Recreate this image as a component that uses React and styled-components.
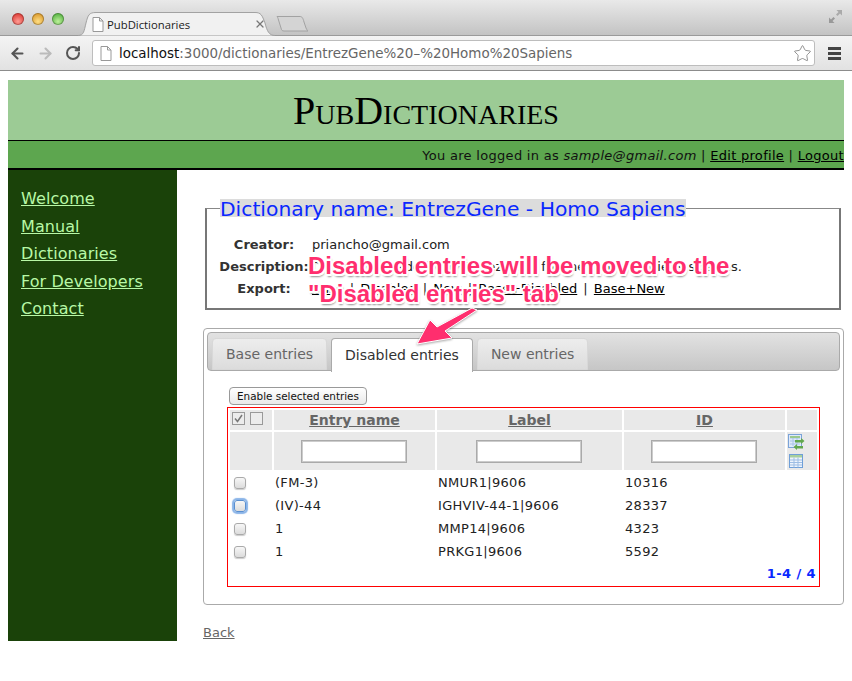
import React from "react";
import styled, { createGlobalStyle } from "styled-components";
import { ArrowLeft, ArrowRight, RotateCw, Star, X } from "lucide-react";

const Global = createGlobalStyle`
  html, body { margin: 0; padding: 0; background: #fff; }
  body { font-family: "DejaVu Sans", Verdana, sans-serif; height: 681px; overflow: hidden; }
`;

const Shell = styled.div`
  position: relative;
  width: 852px;
  height: 681px;
  overflow: hidden;
`;

/* browser chrome */
const TabStrip = styled.div`
  height: 36px;
  display: flex;
  align-items: flex-end;
  padding-left: 12px;
  background: linear-gradient(#e9e9e9, #c3c3c3);
  border-bottom: 1px solid #9a9a9a;
  box-sizing: border-box;
`;
const Lights = styled.div`
  display: flex;
  gap: 8px;
  align-self: flex-start;
  margin: 13px 14px 0 0;
`;
const Light = styled.span`
  width: 12px;
  height: 12px;
  border-radius: 50%;
  background: radial-gradient(circle at 50% 70%, ${(p) => p.$hi}, ${(p) => p.$c} 70%);
  box-shadow: inset 0 0 0 1px rgba(0, 0, 0, 0.25);
`;
const BrowserTab = styled.div`
  position: relative;
  width: 197px;
  height: 24px;
  margin-bottom: -1px;
  display: flex;
  align-items: center;
  padding: 0 0 0 14px;
  box-sizing: border-box;
  font: 11.3px "Open Sans", sans-serif;
  color: #222;
  svg.shape { position: absolute; left: 0; top: 0; z-index: 0; }
`;
const TabLabel = styled.span`
  position: relative;
  flex: 1;
`;
const TabGlyph = styled.span`
  position: relative;
  display: flex;
  margin-right: 3px;
`;
const TabClose = styled(X)`
  position: relative;
  margin-right: 9px;
  color: #777;
`;
const NewTab = styled.svg`
  margin: 0 0 3px 1px;
`;
const Expand = styled.svg`
  position: absolute;
  top: 9px;
  right: 9px;
`;
const Toolbar = styled.div`
  height: 35px;
  display: flex;
  align-items: center;
  padding-left: 9px;
  box-sizing: border-box;
  background: linear-gradient(#f4f4f4, #e2e2e2);
  border-bottom: 1px solid #8c8c8c;
`;
const NavIcon = styled.span`
  display: flex;
  width: ${(p) => p.$w || 28}px;
  color: ${(p) => p.$c};
`;
const UrlBar = styled.div`
  width: 723px;
  height: 26px;
  box-sizing: border-box;
  display: flex;
  align-items: center;
  padding: 0 2px 0 7px;
  background: #fff;
  border: 1px solid #bdbdbd;
  border-radius: 3px;
  font: 13.45px "DejaVu Sans", sans-serif;
  color: #666;
  b { font-weight: 400; color: #111; }
`;
const UrlText = styled.span`
  flex: 1;
  margin-left: 7px;
  white-space: nowrap;
`;
const MenuBars = styled.div`
  margin-left: 13px;
  width: 13px;
  display: flex;
  flex-direction: column;
  gap: 2px;
  i { display: block; height: 3px; background: #444; }
`;

/* page */
const Page = styled.div`
  padding: 9px 8px 0;
`;
const Title = styled.h1`
  margin: 0;
  height: 60px;
  background: #9ccb95;
  text-align: center;
  font: 400 40px/61px "Liberation Serif", serif;
  font-variant: small-caps;
  color: #000;
`;
const UserBar = styled.div`
  height: 30px;
  box-sizing: border-box;
  padding-top: 1px;
  background: #5da64f;
  border-top: 1px solid #000;
  border-bottom: 2px solid #000;
  display: flex;
  justify-content: flex-end;
  align-items: center;
  font-size: 13px;
  letter-spacing: 0.3px;
  white-space: nowrap;
  color: #111;
  a { color: #000; text-decoration: underline; }
`;
const Body = styled.div`
  display: flex;
  align-items: flex-start;
`;
const Side = styled.nav`
  width: 169px;
  height: 471px;
  flex: none;
  box-sizing: border-box;
  background: #1a4209;
  padding: 15px 0 0 13px;
  display: flex;
  flex-direction: column;
  align-items: flex-start;
`;
const SideLink = styled.a`
  font-size: 16px;
  letter-spacing: 0.08px;
  line-height: 27.5px;
  color: #b8f8a6;
  text-decoration: underline;
`;
const Main = styled.main`
  flex: 1;
  padding: 29px 0 0 26px;
  min-width: 0;
`;
const Info = styled.fieldset`
  margin: 0 3px 0 2px;
  padding: 16px 0 9px 11px;
  border: 1px solid #666;
  border-width: 1px 2px 2px 2px;
  border-color: #888 #777 #777 #777;
  font-size: 13px;
`;
const Legend = styled.legend`
  padding: 0;
  margin-left: 2px;
  height: 18px;
  background: #dcdcdc;
  color: #0a28ff;
  font-size: 20.3px;
  line-height: 20px;
`;
const InfoRow = styled.div`
  display: flex;
  height: 22px;
  align-items: center;
  color: #222;
`;
const InfoLabel = styled.strong`
  width: 92px;
  margin-right: 2px;
  text-align: center;
  color: #333;
`;
const Blurb = styled.span`
  letter-spacing: 0.1px;
`;
const ExportLink = styled.a`
  color: #000;
  text-decoration: underline;
`;
const Sep = styled.span`
  margin: 0 6.1px;
`;

const TabsBox = styled.section`
  margin-top: 18px;
  height: 277px;
  box-sizing: border-box;
  padding: 3px;
  border: 1px solid #aaa;
  border-radius: 4px;
`;
const TabBar = styled.div`
  height: 39px;
  box-sizing: border-box;
  display: flex;
  align-items: flex-end;
  gap: 4px;
  padding-left: 4px;
  background: linear-gradient(#e2e2e2, #c6c6c6);
  border: 1px solid #aaa;
  border-radius: 4px;
`;
const TabBtn = styled.div`
  height: ${(p) => (p.$on ? "34px" : "32px")};
  margin-bottom: ${(p) => (p.$on ? "-2px" : "0")};
  padding: ${(p) => (p.$on ? "0 13px 2px" : "0 13px")};
  box-sizing: border-box;
  display: flex;
  align-items: center;
  font-size: 14px;
  color: ${(p) => (p.$on ? "#333" : "#666")};
  background: ${(p) => (p.$on ? "#fff" : "linear-gradient(#ededed, #dcdcdc)")};
  border: 1px solid ${(p) => (p.$on ? "#aaa" : "#d8d8d8")};
  border-bottom: ${(p) => (p.$on ? "none" : undefined)};
  border-radius: 4px 4px 0 0;
  position: relative;
`;
const Panel = styled.div`
  padding: 16px 20px 0 20px;
`;
const EnableBtn = styled.button`
  display: block;
  width: 138px;
  height: 18px;
  margin-left: 2px;
  padding: 0;
  font: 10.4px "DejaVu Sans", sans-serif;
  color: #111;
  background: linear-gradient(#fff, #e9e9e9);
  border: 1px solid #999;
  border-radius: 4px;
`;
const Frame = styled.div`
  margin-top: 2px;
  height: 180px;
  box-sizing: border-box;
  border: 1px solid #f00;
  position: relative;
`;
const Grid = styled.table`
  border-collapse: separate;
  border-spacing: 2px;
  width: 100%;
  table-layout: fixed;
  font-size: 13px;
  color: #222;
`;
const Head = styled.th`
  height: 20px;
  padding: 0;
  background: #e9e9e9;
  font-size: 14px;
  color: #666;
  text-decoration: underline;
  vertical-align: middle;
`;
const FilterCell = styled.td`
  height: 38px;
  padding: 0 2px 0 0;
  background: #e9e9e9;
  text-align: center;
  vertical-align: middle;
`;
const Filter = styled.input`
  display: block;
  margin: 0 auto;
  width: 106px;
  height: 23px;
  box-sizing: border-box;
  border: 1px solid #aaa;
  box-shadow: inset 0 0 0 1px #ccc;
  background: #fff;
`;
const Cell = styled.td`
  height: 21px;
  padding: 0 0 0 1px;
  letter-spacing: 0.3px;
  vertical-align: middle;
`;
const Square = styled.span`
  display: block;
  width: 13px;
  height: 13px;
  box-sizing: border-box;
  border: 1px solid #999;
  background: #ececec;
  svg { display: block; }
`;
const HeadChecks = styled.div`
  display: flex;
  gap: 5px;
  padding: 0 0 3px 2px;
`;
const RowCheck = styled.span`
  display: block;
  width: 12px;
  height: 12px;
  margin-left: 3px;
  box-sizing: border-box;
  border: 1px solid ${(p) => (p.$focus ? "#5a8fd0" : "#aaa")};
  border-radius: 3px;
  background: linear-gradient(#f7f7f7, #dcdcdc);
  box-shadow: ${(p) => (p.$focus ? "0 0 1px 2px #8ab4e8" : "0 1px 1px #ccc")};
`;
const IconStack = styled.div`
  display: flex;
  flex-direction: column;
  align-items: flex-start;
  gap: 3px;
  padding-left: 1px;
  margin-top: -1px;
  svg { display: block; }
  svg:last-child { margin-left: 1px; }
`;
const Pager = styled.div`
  position: absolute;
  right: 3px;
  bottom: 5px;
  font-size: 13px;
  font-weight: 700;
  letter-spacing: 0.4px;
  color: #0a28ff;
`;
const BackLink = styled.a`
  display: inline-block;
  margin-top: 20px;
  font-size: 13px;
  color: #666;
  text-decoration: underline;
`;

/* annotation laid over the page */
const Callout = styled.div`
  position: absolute;
  left: 308px;
  top: 252px;
  font: 700 24px/28px "Liberation Sans", sans-serif;
  color: #ff2e6e;
  white-space: pre;
  text-shadow:
    -2px 0 0 #fff, 2px 0 0 #fff, 0 -2px 0 #fff, 0 2px 0 #fff,
    -1.5px -1.5px 0 #fff, 1.5px -1.5px 0 #fff, -1.5px 1.5px 0 #fff, 1.5px 1.5px 0 #fff,
    1px 3px 2px rgba(0, 0, 0, 0.45);
`;
const CalloutArrow = styled.svg`
  position: absolute;
  left: 408px;
  top: 302px;
  filter: drop-shadow(0 1px 1px rgba(0, 0, 0, 0.35));
`;

const PageGlyph = () => (
  <svg width="12" height="15" viewBox="0 0 12 15">
    <path d="M1 .5h6.5L11 4v10.5H1z M7.5 .5V4H11" fill="#fff" stroke="#999" />
  </svg>
);

const SwapIcon = () => (
  <svg width="17" height="17" viewBox="0 0 17 17">
    <rect x=".5" y=".5" width="13" height="13" fill="#dfeafa" stroke="#7ba3d8" />
    <path d="M2 4h10M2 7h10M2 10h10M5 2v10M9 2v10" stroke="#a9c5e8" />
    <path d="M2 2h10v2H2z" fill="#9bc98e" />
    <path d="M7 6h6V4l3.5 3-3.5 3V8.500H7z" fill="#62a84e" />
    <path d="M15 12H9v-2l-3.500 3 3.500 3v-1.500h6z" fill="#62a84e" />
  </svg>
);

const TableIcon = () => (
  <svg width="14" height="14" viewBox="0 0 14 14">
    <rect x=".5" y=".5" width="13" height="13" fill="#eef4fc" stroke="#6f9fd8" />
    <path d="M1 1h12v2.500H1z" fill="#a8cf9c" />
    <path d="M1 6h12M1 8.500h12M1 11h12M5 3.500v10M9 3.500v10" stroke="#9dbde4" />
  </svg>
);

const rows = [
  ["(FM-3)", "NMUR1|9606", "10316"],
  ["(IV)-44", "IGHVIV-44-1|9606", "28337"],
  ["1", "MMP14|9606", "4323"],
  ["1", "PRKG1|9606", "5592"],
];

export default function App() {
  return (
    <Shell>
      <Global />
      <TabStrip>
        <Lights>
          <Light $c="#e0443e" $hi="#ff9c94" />
          <Light $c="#dea034" $hi="#ffdf85" />
          <Light $c="#5fb84a" $hi="#bdf09a" />
        </Lights>
        <BrowserTab>
          <svg className="shape" width="197" height="24" viewBox="0 0 197 24">
            <path
              d="M0 23.500C6 23.500 6 19 8 11 10 3 11 .5 18 .5H177C183 .5 184 3 187 11 189 19 191 23.500 197 23.500"
              fill="#f1f1f1"
              stroke="#a2a2a2"
            />
          </svg>
          <TabGlyph>
            <PageGlyph />
          </TabGlyph>
          <TabLabel>PubDictionaries</TabLabel>
          <TabClose size={12} strokeWidth={2.5} />
        </BrowserTab>
        <NewTab width="33" height="17" viewBox="0 0 33 17">
          <path
            d="M1 1.500H24C26 1.500 27 3 28 7L30 13C31 15 31.500 16 32 16H8C6 16 5.500 15 5 13L2.500 5C2 3 1.500 2 1 1.500z"
            fill="#d4d4d4"
            stroke="#a2a2a2"
          />
        </NewTab>
        <Expand width="15" height="15" viewBox="0 0 15 15">
          <path d="M8.500 1H14V6.500L12 4.500 9.500 7 8 5.500 10.500 3z" fill="#aaa" />
          <path d="M6.500 14H1V8.500L3 10.500 5.500 8 7 9.500 4.500 12z" fill="#999" />
        </Expand>
      </TabStrip>
      <Toolbar>
        <NavIcon $c="#555">
          <ArrowLeft size={17} strokeWidth={3} />
        </NavIcon>
        <NavIcon $c="#bbb">
          <ArrowRight size={17} strokeWidth={3} />
        </NavIcon>
        <NavIcon $c="#555" $w={27}>
          <RotateCw size={16} strokeWidth={3} />
        </NavIcon>
        <UrlBar>
          <PageGlyph />
          <UrlText>
            <b>localhost</b>:3000/dictionaries/EntrezGene%20–%20Homo%20Sapiens
          </UrlText>
          <Star size={19} strokeWidth={1} color="#777" />
        </UrlBar>
        <MenuBars>
          <i />
          <i />
          <i />
        </MenuBars>
      </Toolbar>
      <Page>
        <Title>PubDictionaries</Title>
        <UserBar>
          <span>
            You are logged in as <em>sample@gmail.com</em> | <a>Edit profile</a> | <a>Logout</a>
          </span>
        </UserBar>
        <Body>
          <Side>
            <SideLink>Welcome</SideLink>
            <SideLink>Manual</SideLink>
            <SideLink>Dictionaries</SideLink>
            <SideLink>For Developers</SideLink>
            <SideLink>Contact</SideLink>
          </Side>
          <Main>
            <Info>
              <Legend>Dictionary name: EntrezGene - Homo Sapiens</Legend>
              <InfoRow>
                <InfoLabel>Creator:</InfoLabel>
                <span>priancho@gmail.com</span>
              </InfoRow>
              <InfoRow>
                <InfoLabel>Description:</InfoLabel>
                <Blurb>Dictionary made from EntrezGene for the Homo Sapiens species.</Blurb>
              </InfoRow>
              <InfoRow>
                <InfoLabel>Export:</InfoLabel>
                <span>
                  <ExportLink>Base</ExportLink>
                  <Sep>|</Sep>
                  <ExportLink>Disabled</ExportLink>
                  <Sep>|</Sep>
                  <ExportLink>New</ExportLink>
                  <Sep>|</Sep>
                  <ExportLink>Base+Disabled</ExportLink>
                  <Sep>|</Sep>
                  <ExportLink>Base+New</ExportLink>
                </span>
              </InfoRow>
            </Info>
            <TabsBox>
              <TabBar>
                <TabBtn>Base entries</TabBtn>
                <TabBtn $on>Disabled entries</TabBtn>
                <TabBtn>New entries</TabBtn>
              </TabBar>
              <Panel>
                <EnableBtn>Enable selected entries</EnableBtn>
                <Frame>
                  <Grid>
                    <colgroup>
                      <col style={{ width: 42 }} />
                      <col style={{ width: 161 }} />
                      <col style={{ width: 185 }} />
                      <col style={{ width: 161 }} />
                      <col style={{ width: 30 }} />
                    </colgroup>
                    <thead>
                      <tr>
                        <Head>
                          <HeadChecks>
                            <Square>
                              <svg width="11" height="11" viewBox="0 0 11 11">
                                <path d="M2 5.500l2.500 3L9 2" fill="none" stroke="#777" strokeWidth="1.500" />
                              </svg>
                            </Square>
                            <Square />
                          </HeadChecks>
                        </Head>
                        <Head>Entry name</Head>
                        <Head>Label</Head>
                        <Head>ID</Head>
                        <Head />
                      </tr>
                      <tr>
                        <FilterCell />
                        <FilterCell>
                          <Filter />
                        </FilterCell>
                        <FilterCell>
                          <Filter />
                        </FilterCell>
                        <FilterCell>
                          <Filter />
                        </FilterCell>
                        <FilterCell>
                          <IconStack>
                            <SwapIcon />
                            <TableIcon />
                          </IconStack>
                        </FilterCell>
                      </tr>
                    </thead>
                    <tbody>
                      {rows.map((r, i) => (
                        <tr key={r[1]}>
                          <Cell>
                            <RowCheck $focus={i === 1} />
                          </Cell>
                          <Cell>{r[0]}</Cell>
                          <Cell>{r[1]}</Cell>
                          <Cell>{r[2]}</Cell>
                          <Cell />
                        </tr>
                      ))}
                    </tbody>
                  </Grid>
                  <Pager>1-4 / 4</Pager>
                </Frame>
              </Panel>
            </TabsBox>
            <BackLink>Back</BackLink>
          </Main>
        </Body>
      </Page>
      <Callout>{'Disabled entries will be moved to the\n"Disabled entries" tab'}</Callout>
      <CalloutArrow width="72" height="48" viewBox="0 0 72 48">
        <path
          d="M9 42L22 18 29 25 64 6 69 8 37 29 44 36z"
          fill="#ff2e6e"
          stroke="#fff"
          strokeWidth="1"
          strokeLinejoin="round"
        />
      </CalloutArrow>
    </Shell>
  );
}
